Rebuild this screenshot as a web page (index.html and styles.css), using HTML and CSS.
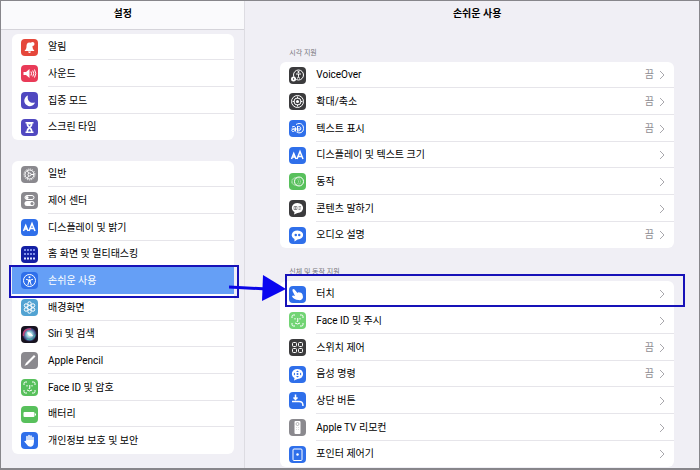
FILE: index.html
```
<!DOCTYPE html>
<html lang="ko">
  <head>
    <meta charset="UTF-8" />
    <title>설정 - 손쉬운 사용</title>
    <meta name="viewport" content="width=device-width, initial-scale=1.0" />
    <link rel="stylesheet" href="styles.css">
  </head>
  <body>
    <div class="screen">
      <nav class="sidebar">
        <h2 class="title sidebar-title">설정</h2>
        <ul class="group">
          <li><a class="row" href="#notifications">
            <svg class="icon red" viewBox="0 0 34 34"><path class="fill" d="M17 7c-5 0-6 4-6 8 0 5-2 6-4 9h20c-2-3-4-4-4-9M17 7c5 0 6 4 6 8zM14 25h6q-1 3-3 3t-3-3z" /><circle class="fill" cx="23" cy="10" r="4" /></svg>
            <span class="label">알림</span></a></li>
          <li><a class="row" href="#sounds">
            <svg class="icon pink" viewBox="0 0 34 34"><path class="fill" d="M5 14h5l7-6v18l-7-6H5z" /><path d="M20 13q2 4 0 8M23.500 11q4 6 0 12M27 9q5 8 0 16" /></svg>
            <span class="label">사운드</span></a></li>
          <li><a class="row" href="#focus">
            <svg class="icon indigo" viewBox="0 0 34 34"><path class="fill" d="M14 7a11 11 0 1 0 14 14C19 24 11 17 14 7z" /></svg>
            <span class="label">집중 모드</span></a></li>
          <li><a class="row" href="#screen-time">
            <svg class="icon indigo" viewBox="0 0 34 34"><path class="fill" d="M9 6h16v3h-2c0 4-1 6-4 8 3 2 4 4 4 8h2v3H9v-3h2c0-4 1-6 4-8-3-2-4-4-4-8H9z" /><path class="shade" d="M14 11h6l-3 4zM14 25q0-3 3-5 3 2 3 5z" /></svg>
            <span class="label">스크린 타임</span></a></li>
        </ul>
        <ul class="group">
          <li><a class="row" href="#general">
            <svg class="icon gray" viewBox="0 0 34 34"><circle class="dashed" cx="17" cy="17" r="11" /><circle cx="17" cy="17" r="9" /><circle cx="17" cy="17" r="3" /><path d="M20 17h6M15.500 14.500l-3-5M15.500 19.500l-3 5" /></svg>
            <span class="label">일반</span></a></li>
          <li><a class="row" href="#control-center">
            <svg class="icon gray" viewBox="0 0 34 34"><rect x="8" y="7" width="18" height="8" rx="4" /><circle class="fill" cx="12" cy="11" r="3" /><rect class="fill" x="7" y="18" width="20" height="10" rx="5" /><circle class="shade" cx="22" cy="23" r="3" /></svg>
            <span class="label">제어 센터</span></a></li>
          <li><a class="row" href="#display">
            <svg class="icon blue" viewBox="0 0 34 34"><path class="letters" d="M5 24l4.500-11L14 24M6.500 20h6M16 24l6-15 6 15M18 19h8" /></svg>
            <span class="label">디스플레이 및 밝기</span></a></li>
          <li><a class="row" href="#home-screen">
            <svg class="icon navy" viewBox="0 0 34 34"><path class="dots" d="M6 8h23M6 16h23" /><path class="dots pale" d="M6 25h23" /></svg>
            <span class="label">홈 화면 및 멀티태스킹</span></a></li>
          <li><a class="row selected" href="#accessibility" aria-current="page">
            <svg class="icon blue" viewBox="0 0 34 34"><circle cx="17" cy="17" r="12" /><circle class="fill" cx="17" cy="10.500" r="2" /><path d="M10 14.500l5 1.500h4l5-1.500M15.500 16v4l-2 6M18.500 16v4l2 6M17 15v5" /></svg>
            <span class="label">손쉬운 사용</span></a></li>
          <li><a class="row" href="#wallpaper">
            <svg class="icon sky" viewBox="0 0 34 34"><circle cx="17" cy="17" r="4" /><circle cx="17" cy="9" r="3.500" /><circle cx="17" cy="25" r="3.500" /><circle cx="10" cy="13" r="3.500" /><circle cx="24" cy="13" r="3.500" /><circle cx="10" cy="21" r="3.500" /><circle cx="24" cy="21" r="3.500" /></svg>
            <span class="label">배경화면</span></a></li>
          <li><a class="row" href="#siri">
            <svg class="icon siri" viewBox="0 0 34 34"><defs><radialGradient id="orb"><stop offset="0" stop-color="#fff" /><stop offset=".4" stop-color="#8fd0d8" /><stop offset=".8" stop-color="#49558f" /><stop offset="1" stop-color="#252044" /></radialGradient></defs><circle class="orb" cx="17" cy="17" r="14" /><path class="magenta" d="M5 20C4 10 11 5 20 6" /><path class="teal" d="M11 26c8 4 16 0 17-9" /><path class="fill" d="M12 13q7-2 12 7-9 2-12-7z" /></svg>
            <span class="label">Siri 및 검색</span></a></li>
          <li><a class="row" href="#pencil">
            <svg class="icon gray" viewBox="0 0 34 34"><path class="fill" d="M26 6l3 3-16 16-6 3 3-6z" /></svg>
            <span class="label">Apple Pencil</span></a></li>
          <li><a class="row" href="#face-id">
            <svg class="icon green" viewBox="0 0 34 34"><path d="M6 12V9q0-3 3-3h3M22 6h3q3 0 3 3v3M28 22v3q0 3-3 3h-3M12 28H9q-3 0-3-3v-3M12 12v3M22 12v3M17.500 12v7h-2M12 22q5 4 10 0" /></svg>
            <span class="label">Face ID 및 암호</span></a></li>
          <li><a class="row" href="#battery">
            <svg class="icon green" viewBox="0 0 34 34"><rect class="fill" x="5" y="12" width="22" height="10" rx="2" /><path d="M29 15v4" /></svg>
            <span class="label">배터리</span></a></li>
          <li><a class="row" href="#privacy">
            <svg class="icon blue" viewBox="0 0 34 34"><path class="hand" d="M12 18V9M16 17V7M20 17V8M24 20v-9" /><path class="fill" d="M10.500 16h15v6c0 9-10 9-13 4l-6-7q2-3 4 0z" /></svg>
            <span class="label">개인정보 보호 및 보안</span></a></li>
        </ul>
      </nav>

      <main class="detail">
        <h1 class="title">손쉬운 사용</h1>
        <section>
          <h3 class="section-label">시각 지원</h3>
          <ul class="group">
            <li><a class="row" href="#voiceover">
              <svg class="icon dark" viewBox="0 0 34 34"><circle cx="19" cy="16" r="10" /><circle class="fill" cx="19" cy="10" r="2" /><path d="M14 14h10M19 14v5M17 23l2-4 2 4" /><circle class="fill" cx="9" cy="24" r="5" /><path class="mark" d="M8 22l3 2-3 2z" /></svg>
              <span class="label">VoiceOver</span><span class="value">끔</span><svg class="chevron" viewBox="0 0 6 10"><path d="M1 1l4 4-4 4" /></svg></a></li>
            <li><a class="row" href="#zoom">
              <svg class="icon dark" viewBox="0 0 34 34"><circle cx="17" cy="17" r="12" /><circle cx="17" cy="17" r="7" /><circle class="fill" cx="17" cy="17" r="3" /><path d="M17 7v4M17 23v4M7 17h4M23 17h4" /></svg>
              <span class="label">확대/축소</span><span class="value">끔</span><svg class="chevron" viewBox="0 0 6 10"><path d="M1 1l4 4-4 4" /></svg></a></li>
            <li><a class="row" href="#hover-text">
              <svg class="icon blue" viewBox="0 0 34 34"><path d="M6 14q5-3 7 1v8M13 18c-9-1-9 6-4 5l4-3M14 9c9-5 15 0 15 8s-8 11-14 7M17 12v11M17 13c9-2 9 10 0 9M5 18h17" /></svg>
              <span class="label">텍스트 표시</span><span class="value">끔</span><svg class="chevron" viewBox="0 0 6 10"><path d="M1 1l4 4-4 4" /></svg></a></li>
            <li><a class="row" href="#text-size">
              <svg class="icon blue" viewBox="0 0 34 34"><path class="letters" d="M5 24l4.500-11L14 24M6.500 20h6M16 24l6-15 6 15M18 19h8" /></svg>
              <span class="label">디스플레이 및 텍스트 크기</span><svg class="chevron" viewBox="0 0 6 10"><path d="M1 1l4 4-4 4" /></svg></a></li>
            <li><a class="row" href="#motion">
              <svg class="icon green" viewBox="0 0 34 34"><circle cx="20" cy="17" r="9" /><circle class="faint" cx="15" cy="17" r="8" /><circle class="faint" cx="12" cy="17" r="7" /></svg>
              <span class="label">동작</span><svg class="chevron" viewBox="0 0 6 10"><path d="M1 1l4 4-4 4" /></svg></a></li>
            <li><a class="row" href="#spoken-content">
              <svg class="icon dark" viewBox="0 0 34 34"><path class="fill" d="M17 6c15 0 15 20 0 20l-7 3 1-5C2 19 5 6 17 6z" /><path class="mark-line" d="M10 13h6v6h-6zM19 13h5M19 16h5M19 19h4M13 13v6" /></svg>
              <span class="label">콘텐츠 말하기</span><svg class="chevron" viewBox="0 0 6 10"><path d="M1 1l4 4-4 4" /></svg></a></li>
            <li><a class="row" href="#audio-descriptions">
              <svg class="icon blue" viewBox="0 0 34 34"><path class="fill" d="M17 7c15 0 15 18 0 18l-6 4v-5C2 20 4 7 17 7z" /><circle class="shade" cx="13.500" cy="16" r="2.500" /><circle class="shade" cx="20.500" cy="16" r="2.500" /></svg>
              <span class="label">오디오 설명</span><span class="value">끔</span><svg class="chevron" viewBox="0 0 6 10"><path d="M1 1l4 4-4 4" /></svg></a></li>
          </ul>
        </section>
        <section>
          <h3 class="section-label">신체 및 동작 지원</h3>
          <ul class="group">
            <li><a class="row outlined" href="#touch">
              <svg class="icon blue" viewBox="0 0 34 34"><path class="fill" d="M7 7q2-2 4 0l6 7q1-2 4-1 4-1 6 4l1 5c0 5-5 7-9 6-6 0-10-3-13-7 1-3 3-2 6-1L7 10z" /></svg>
              <span class="label">터치</span><svg class="chevron" viewBox="0 0 6 10"><path d="M1 1l4 4-4 4" /></svg></a></li>
            <li><a class="row" href="#attention">
              <svg class="icon light-green" viewBox="0 0 34 34"><path d="M6 12V9q0-3 3-3h3M22 6h3q3 0 3 3v3M28 22v3q0 3-3 3h-3M12 28H9q-3 0-3-3v-3M12 12v3M22 12v3M17.500 12v7h-2M12 22q5 4 10 0" /></svg>
              <span class="label">Face ID 및 주시</span><svg class="chevron" viewBox="0 0 6 10"><path d="M1 1l4 4-4 4" /></svg></a></li>
            <li><a class="row" href="#switch-control">
              <svg class="icon dark" viewBox="0 0 34 34"><rect x="7" y="7" width="8" height="8" rx="2" /><rect x="19" y="7" width="8" height="8" rx="2" /><rect x="7" y="19" width="8" height="8" rx="2" /><rect x="19" y="19" width="8" height="8" rx="2" /></svg>
              <span class="label">스위치 제어</span><span class="value">끔</span><svg class="chevron" viewBox="0 0 6 10"><path d="M1 1l4 4-4 4" /></svg></a></li>
            <li><a class="row" href="#voice-control">
              <svg class="icon blue" viewBox="0 0 34 34"><path class="fill" d="M17 6c15 0 15 20 0 20l-7 3 1-5C2 19 5 6 17 6z" /><path class="shade" d="M17 9l3 3h-6zM17 23l3-3h-6zM9 16l3-3v6zM25 16l-3-3v6z" /><circle class="shade" cx="17" cy="16" r="2" /></svg>
              <span class="label">음성 명령</span><span class="value">끔</span><svg class="chevron" viewBox="0 0 6 10"><path d="M1 1l4 4-4 4" /></svg></a></li>
            <li><a class="row" href="#top-button">
              <svg class="icon blue" viewBox="0 0 34 34"><path class="letters" d="M13 5v9M9 11l4 4 4-4M6 19h14c6 0 8 2 8 9" /></svg>
              <span class="label">상단 버튼</span><svg class="chevron" viewBox="0 0 6 10"><path d="M1 1l4 4-4 4" /></svg></a></li>
            <li><a class="row" href="#tv-remote">
              <svg class="icon gray" viewBox="0 0 34 34"><rect class="fill" x="11" y="4" width="12" height="26" rx="2" /><circle class="ring" cx="17" cy="10" r="3" /><path class="ring" d="M15 16v1M19 16v1M15 20v1M19 20v1" /></svg>
              <span class="label">Apple TV 리모컨</span><svg class="chevron" viewBox="0 0 6 10"><path d="M1 1l4 4-4 4" /></svg></a></li>
            <li><a class="row" href="#pointer-control">
              <svg class="icon blue" viewBox="0 0 34 34"><rect x="8" y="6" width="18" height="23" rx="2" /><circle class="fill" cx="17" cy="17" r="2.500" /></svg>
              <span class="label">포인터 제어기</span><svg class="chevron" viewBox="0 0 6 10"><path d="M1 1l4 4-4 4" /></svg></a></li>
          </ul>
        </section>
      </main>

      <!-- arrow from the selected menu to the touch row -->
      <svg class="arrow" viewBox="0 0 58 28" aria-hidden="true">
        <path class="arrow-line" d="M0 13l38 2" />
        <path class="arrow-head" d="M34 1l23 14-24 12z" />
      </svg>
    </div>
  </body>
</html>
```
FILE: styles.css
```
* {
  box-sizing: border-box;
}
body {
  margin: 0;
  font-family: Roboto, "Noto Sans CJK KR", sans-serif;
  font-size: 10px;
  line-height: 16px;
  color: #000;
}
ul {
  list-style: none;
  margin: 0;
  padding: 0;
}
.screen {
  position: relative;
  display: flex;
  height: 100vh;
  overflow: hidden;
  border: 1px solid #87868b;
  border-bottom-width: 2px;
  background: #f0eff5;
}
.sidebar {
  flex: 0 0 35%;
  border-right: 1px solid #dddce2;
}
.sidebar .group {
  margin: 0 10px 21px 11px;
}
.title {
  margin: 0;
  padding: 5px 0 7px;
  font-size: 10px;
  font-weight: 700;
  text-align: center;
}
.sidebar-title {
  margin-bottom: 4px;
  background: #fafafc;
  border-bottom: 1px solid #d5d4da;
}
.detail {
  flex: 1;
  padding: 0 25px 0 35px;
}
.detail .title {
  margin-bottom: 19px;
}
.section-label {
  margin: 0;
  padding: 0 9px 4px;
  font-size: 7px;
  font-weight: 400;
  line-height: 10px;
  color: #77767c;
}
.detail .group {
  margin-bottom: 19px;
}
.group {
  background: #fff;
  border-radius: 6px;
}
.row {
  position: relative;
  display: flex;
  align-items: center;
  height: 27px;
  padding-left: 9px;
  color: inherit;
  text-decoration: none;
}
li:nth-child(3n + 1) .row {
  height: 26px;
}
.label {
  flex: 1;
  margin-left: 10px;
}
/* separator starts under the text, not under the icon */
.row::before {
  content: "";
  position: absolute;
  left: 36px;
  right: 0;
  bottom: 0;
  height: 1px;
  background: #e6e5ea;
}
li:last-child .row::before {
  display: none;
}
.value {
  color: #8f8e93;
}
.chevron {
  width: 6px;
  height: 10px;
  margin: 0 9px 0 5px;
  fill: none;
  stroke: #a9a8ad;
  stroke-width: 1;
}

/* selected row and outlines */
.selected {
  background: #659ff6;
  color: #fff;
}
.selected::before {
  display: none;
}
.selected::after,
.outlined::after {
  content: "";
  position: absolute;
  z-index: 1;
  border: 2px solid #1712b8;
}
.selected::after {
  inset: -2px -5px -4px -3px;
}
.outlined::after {
  inset: -7px -11px 0 5px;
}
.arrow {
  position: absolute;
  z-index: 2;
  left: 228px;
  top: 273px;
  width: 58px;
  height: 28px;
}
.arrow-line {
  stroke: #0a05e6;
  stroke-width: 3;
}
.arrow-head {
  fill: #0a05f0;
}

/* icons */
.icon {
  width: 17px;
  height: 17px;
  border-radius: 4px;
  fill: none;
  stroke: #fff;
  stroke-width: 2;
}
.icon .fill {
  fill: #fff;
  stroke: none;
}
.icon .shade {
  fill: #5560c8;
  stroke: none;
}
.icon .letters {
  stroke-width: 3;
}
.icon .dashed {
  stroke-dasharray: 2 2;
}
.icon .dots {
  stroke-width: 4;
  stroke-dasharray: 4 2;
  stroke: #7f8fe8;
}
.icon .pale {
  stroke: #dfe4ff;
}
.icon .faint {
  stroke-width: 1;
  stroke-dasharray: 2 1;
}
.icon .hand {
  stroke-width: 3;
  stroke-linecap: round;
}
.icon .mark {
  fill: #3b3b3d;
  stroke: none;
}
.icon .mark-line {
  stroke: #3b3b3d;
  stroke-width: 1;
}
.icon .ring {
  stroke: #77767b;
  stroke-width: 1;
}
.icon .orb {
  fill: url(#orb);
  stroke: none;
}
.icon .magenta {
  stroke: #c24476;
  stroke-width: 3;
}
.icon .teal {
  stroke: #3fb9a8;
  stroke-width: 2;
}
.red {
  background: #e5473b;
}
.pink {
  background: #e93b58;
}
.indigo {
  background: #5048c0;
}
.gray {
  background: #8a898e;
}
.gray .shade {
  fill: #8a898e;
}
.blue {
  background: #2f6fea;
}
.blue .shade {
  fill: #2f6fea;
}
.navy {
  background: #1420a4;
}
.sky {
  background: #52a3d2;
}
.siri {
  background: #17131f;
}
.green {
  background: #58c05c;
}
.light-green {
  background: #72d474;
}
.dark {
  background: #3b3b3d;
}
```
